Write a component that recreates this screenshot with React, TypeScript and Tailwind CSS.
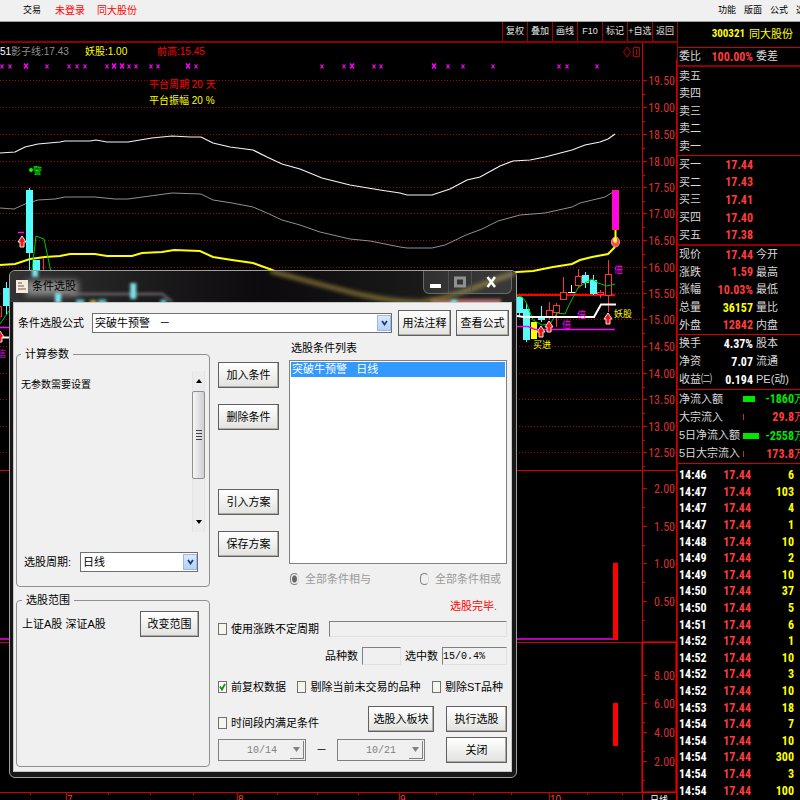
import type { ReactNode } from 'react';

const priceLabels: [string, number][] = [
  ['19.50', 80], ['19.00', 107], ['18.50', 134], ['18.00', 161], ['17.50', 187],
  ['17.00', 213], ['16.50', 240], ['16.00', 267], ['15.50', 293], ['15.00', 319],
  ['14.50', 346], ['14.00', 373], ['13.50', 399], ['13.00', 426], ['12.50', 452],
];

const volumeLabels: [string, number][] = [
  ['2.00', 488], ['1.50', 526], ['1.00', 563], ['0.50', 601],
  ['8.00', 675], ['6.00', 703], ['4.00', 732], ['2.00', 761],
];

const smallMarks = [2, 10, 47, 69, 77, 85, 107, 129, 136, 151, 158, 196, 322, 344, 374, 381, 448, 463, 493, 559, 567, 597];
const bigMarks = [26, 114, 122, 188, 352, 434];

const monthTicks = [30, 66, 108, 150, 193, 237, 277, 317, 358, 399, 436, 473, 511, 549, 587, 622];

const sellRows = ['卖五', '卖四', '卖三', '卖二', '卖一'];

const buyRows = [
  ['买一', '17.44'], ['买二', '17.43'], ['买三', '17.41'], ['买四', '17.40'], ['买五', '17.38'],
];

const quoteRows = [
  ['现价', '17.44', '今开', 'text-[#ff3c3c]'],
  ['涨跌', '1.59', '最高', 'text-[#ff3c3c]'],
  ['涨幅', '10.03%', '最低', 'text-[#ff3c3c]'],
  ['总量', '36157', '量比', 'text-[#ffff00]'],
  ['外盘', '12842', '内盘', 'text-[#ff3c3c]'],
];

const capitalRows = [
  ['换手', '4.37%', '股本', 'text-white'],
  ['净资', '7.07', '流通', 'text-white'],
  ['收益㈡', '0.194', 'PE(动)', 'text-white'],
];

const flowRows = [
  { label: '净流入额', value: '-1860', color: 'text-[#00e600]', bar: 'h-[6px] w-[12px] bg-[#00e600]' },
  { label: '大宗流入', value: '29.8', color: 'text-[#ff3c3c]', bar: 'h-[6px] w-px bg-[#c03030]' },
  { label: '5日净流入额', value: '-2558', color: 'text-[#00e600]', bar: 'h-[6px] w-[16px] bg-[#00e600]' },
  { label: '5日大宗流入', value: '173.8', color: 'text-[#ff3c3c]', bar: 'h-[6px] w-px bg-[#c03030]' },
];

const ticks = [
  ['14:46', '6'], ['14:47', '103'], ['14:47', '4'], ['14:47', '1'], ['14:48', '10'],
  ['14:49', '2'], ['14:49', '10'], ['14:50', '37'], ['14:50', '5'], ['14:51', '6'],
  ['14:52', '1'], ['14:52', '10'], ['14:52', '3'], ['14:52', '10'], ['14:53', '18'],
  ['14:54', '7'], ['14:54', '10'], ['14:54', '300'], ['14:54', '3'], ['14:54', '100'],
];

function Arrow({ x, y }: { x: number; y: number }) {
  return (
    <path
      d={`M${x} ${y - 6} l4 6 h-2 v5 h-4 v-5 h-2 z`}
      fill="#ff1010"
      stroke="#e8e8e8"
      strokeWidth="1"
    />
  );
}

function Candle({ x, top, bottom, high, low, up }: { x: number; top: number; bottom: number; high: number; low: number; up?: boolean }) {
  const color = up ? '#ff3232' : '#54fcfc';
  return (
    <g stroke={color} fill={up ? '#000' : color}>
      <path d={`M${x + 3.5} ${high}V${top}M${x + 3.5} ${bottom}V${low}`} />
      <rect x={x + 0.5} y={top + 0.5} width="6" height={bottom - top - 1} />
    </g>
  );
}

function Chart() {
  return (
    <svg viewBox="0 60 677 740" preserveAspectRatio="xMaxYMin meet" className="block min-h-0 w-full flex-1" fill="none">
      {/* grid and axes */}
      <g stroke="#a80000" strokeDasharray="1 2">
        {priceLabels.map(([t, y]) => <path key={t} d={`M0 ${y + 0.5}H643`} />)}
      </g>
      <g stroke="#d00000">
        <path d="M642.5 60V800M676.5 60V800M0 470.5H677M0 642.5H677M0 792.5H677" />
        {priceLabels.map(([t, y]) => <path key={t} d={`M643 ${y + 0.5}h4M643 ${y + 14.5}h2`} />)}
        {volumeLabels.map(([t, y]) => <path key={t + y} d={`M643 ${y + 0.5}h4M643 ${y + 19.5}h2`} />)}
        {monthTicks.map((x) => <path key={x} d={`M${x + 0.5} 792v3`} />)}
        <path d="M66.5 792v8M237.5 792v8M399.5 792v8M549.5 792v8" />
      </g>
      <path d="M642 642H676V792H642Z" stroke="#ff0000" />
      <g fill="#d83030" fontSize="12" textAnchor="end" className="font-['Liberation_Sans_Narrow','Roboto_Condensed','Liberation_Sans',sans-serif]">
        {priceLabels.map(([t, y]) => <text key={t} x="675" y={y + 5}>{t}</text>)}
        {volumeLabels.map(([t, y]) => <text key={t + y} x="675" y={y + 5}>{t}</text>)}
      </g>
      <g fill="#ff3c3c" fontSize="10">
        <text x="67" y="803">7</text>
        <text x="238" y="803">8</text>
        <text x="400" y="803">9</text>
        <text x="550" y="803">10</text>
        <text x="650" y="803" fill="#fff" fontSize="9">日线</text>
      </g>

      {/* signal marks */}
      <g stroke="#ff00ff">
        {smallMarks.map((x) => <path key={x} d={`M${x - 1.5} 64.500l3 4m0 -4l-3 4`} strokeWidth="1.200" />)}
        {bigMarks.map((x) => <path key={x} d={`M${x - 2} 63.500l4 5m0 -5l-4 5`} strokeWidth="1.500" />)}
      </g>

      {/* bands */}
      <path stroke="#f4f4f4" strokeWidth="1.200" d="M0 153L15 152L25 147L38 144L60 142L65 141L90 141L96 140L107 142L128 142L140 140L152 138L172 136L190 137L201 137L213 143L230 147L253 150L267 157L282 164L300 169L322 178L350 185L380 190L400 193L407 195L432 195L450 189L467 180L480 177L500 166L513 161L530 160L545 157L572 150L585 145L600 142L608 139L615 134" />
      <path stroke="#909090" d="M0 208L14 209L25 204L38 200L55 199L65 197L95 197L115 199L128 199L150 196L172 193L201 194L213 200L232 203L253 207L267 213L282 220L300 225L320 232L350 239L370 241L400 247L407 248L432 248L445 245L466 235L482 229L498 221L520 215L545 213L572 207L580 203L605 197L613 192" />
      <path stroke="#ffff00" strokeWidth="2" d="M0 265L15 264L30 259L45 257L60 256L70 254L95 254L107 256L132 256L142 253L162 252L174 250L200 251L213 257L232 260L253 263L275 271L400 290L517 272L533 271L553 267L572 264L580 260L592 257L608 254L615 247" />

      {/* left candles */}
      <path stroke="#00c800" d="M32 270L36 236L44 239L51 272M0 324L9 311" />
      <Candle x={3} top={288} bottom={306} high={282} low={314} />
      <path stroke="#ff3232" d="M0 306.500H1.500V317H0M43.500 258V270" />
      <Candle x={26} top={190} bottom={253} high={188} low={270} />
      <Candle x={33} top={260} bottom={280} high={260} low={282} />
      <path stroke="#ff00ff" d="M18 232.500h6M0 327.500h10" strokeWidth="1.500" />
      <path stroke="#fff" strokeWidth="2" d="M2 337.500h12" />
      <Arrow x={22} y={242} />
      <Arrow x={0} y={337} />
      <circle cx="31" cy="170" r="2" fill="#00ff00" />

      {/* right candles */}
      <path stroke="#ff0000" strokeWidth="2" d="M517 295H615" />
      <Candle x={516} top={297} bottom={313} high={297} low={317} />
      <Candle x={523} top={309} bottom={340} high={304} low={342} />
      <Candle x={538} top={318} bottom={320} high={306} low={322} />
      <rect x="531" y="322" width="6" height="17" fill="#ffff00" />
      <Candle x={546} top={310} bottom={318} high={302} low={320} up />
      <Candle x={553} top={305} bottom={313} high={303} low={327} up />
      <Candle x={560} top={292} bottom={300} high={277} low={300} up />
      <path stroke="#fff" d="M568 292.500h7M571.500 285v8" />
      <Candle x={575} top={276} bottom={286} high={269} low={288} up />
      <Candle x={582} top={275} bottom={283} high={272} low={288} />
      <Candle x={590} top={280} bottom={294} high={275} low={295} />
      <Candle x={597} top={292} bottom={295} high={290} low={298} up />
      <Candle x={605} top={274} bottom={296} high={260} low={312} up />
      <path stroke="#00c800" d="M517 296L522 297L526 302L533 320L542 325L550 324L557 313L565 314L570 303L578 288L585 283L592 279L598 283L607 286L615 284" />
      <path stroke="#fff" strokeWidth="2" d="M517 316L524 317H594L601 304.500H616" />
      <path stroke="#ff00ff" strokeWidth="1.500" d="M517 326.500H528L535 329.500H615" />
      <Arrow x={541} y={332} />
      <Arrow x={549} y={327} />
      <Arrow x={608} y={319} />
      <rect x="612.500" y="190.500" width="6" height="39" fill="#ff00ff" stroke="#ff2060" />
      <ellipse cx="615.500" cy="242" rx="4" ry="5" fill="#f05050" stroke="#ff9090" />
      <circle cx="615" cy="240" r="2" fill="#fff" />
      <path d="M615.500 230v13" stroke="#ffff00" strokeWidth="2" />

      {/* volume and indicator bars */}
      <path stroke="#b400b4" strokeWidth="2" d="M0 639H613" />
      <rect x="613" y="563" width="5" height="77" fill="#ff0000" />
      <rect x="613" y="703" width="5" height="43" fill="#ff0000" />

      <g fontSize="10">
        <text x="149" y="88" fill="#ff0000">平台周期 20 天</text>
        <text x="149" y="104" fill="#ffff00">平台振幅 20 %</text>
        <text x="33" y="174" fontSize="9" fill="#00ff00">警</text>
        <text x="533" y="348" fontSize="9" fill="#ffff00">买进</text>
        <text x="614" y="317" fontSize="9" fill="#ffff00">妖股</text>
        <text x="614" y="273" fontSize="9" fill="#ff00ff">倍</text>
        <text x="562" y="328" fontSize="9" fill="#ff00ff">倍</text>
        <text x="577" y="318" fontSize="9" fill="#ff00ff">倍</text>
        <text x="-3" y="357" fontSize="9" fill="#ff00ff">信</text>
      </g>
    </svg>
  );
}

function QuoteTable({ rows, className }: { rows: string[][]; className: string }) {
  return (
    <table className={`w-full table-fixed border-collapse whitespace-nowrap leading-none ${className}`}>
      <tbody>
        {rows.map(([label, value, next, color]) => (
          <tr key={label}>
            <th scope="row" className="w-[33px] p-0 pl-px text-left font-normal text-[#d8d8d8]">{label}</th>
            <td className={`w-[42px] p-0 text-right text-xs font-bold font-['Liberation_Sans_Narrow','Roboto_Condensed','Liberation_Sans',sans-serif] ${color}`}>{value}</td>
            <td className="p-0 pl-[3px] text-[#d8d8d8]">{next}</td>
          </tr>
        ))}
      </tbody>
    </table>
  );
}

function QuotePanel() {
  return (
    <aside className="w-[123px] shrink-0 overflow-hidden border-l border-[#a00000] text-[11px] text-[#d8d8d8]">
      <h1 className="flex h-[26px] items-center justify-end gap-1 border-b border-[#d00000] pr-[7px] whitespace-nowrap text-[#ffff00]">
        <span className="text-[11px] font-bold font-['Liberation_Sans_Narrow','Roboto_Condensed','Liberation_Sans',sans-serif]">300321</span>
        <span>同大股份</span>
      </h1>
      <QuoteTable rows={[['委比', '100.00%', '委差', 'text-[#ff3c3c]']]} className="h-[17px]" />
      <QuoteTable rows={sellRows.map((r) => [r, '', '', ''])} className="h-[91px] border-y border-t-2 border-t-[#900000] border-b-[#d00000]" />
      <QuoteTable rows={buyRows.map(([a, b]) => [a, b, '', 'text-[#ff3c3c]'])} className="h-[90px] border-b-2 border-[#900000]" />
      <QuoteTable rows={quoteRows} className="h-[89px] border-b border-[#d00000]" />
      <QuoteTable rows={capitalRows} className="h-[55px] border-b border-[#d00000]" />
      <table className="h-[74px] w-[127px] table-fixed border-collapse border-b border-[#d00000] whitespace-nowrap leading-none">
        <tbody>
          {flowRows.map((r) => (
            <tr key={r.label}>
              <th scope="row" className="w-[65px] p-0 pl-px text-left font-normal">{r.label}</th>
              <td className="w-[18px] p-0"><div className={r.bar} /></td>
              <td className={`p-0 text-right ${r.color}`}>
                <span className="text-xs font-bold font-['Liberation_Sans_Narrow','Roboto_Condensed','Liberation_Sans',sans-serif]">{r.value}</span>万
              </td>
            </tr>
          ))}
        </tbody>
      </table>
      <table className="mt-[3px] h-[332px] w-full table-fixed border-collapse text-xs leading-none font-bold font-['Liberation_Sans_Narrow','Roboto_Condensed','Liberation_Sans',sans-serif]">
        <tbody>
          {ticks.map(([time, vol], i) => (
            <tr key={i}>
              <td className="w-[33px] p-0 pl-px text-white">{time}</td>
              <td className="w-[40px] p-0 text-right text-[#ff3c3c]">17.44</td>
              <td className="p-0 pr-1.5 text-right text-[#ffff00]">{vol}</td>
            </tr>
          ))}
        </tbody>
      </table>
    </aside>
  );
}

function Btn({ children, className = '' }: { children: ReactNode; className?: string }) {
  return (
    <button className={`h-[26px] shrink-0 border border-[#606060] bg-gradient-to-b from-white to-[#e2e2e0] whitespace-nowrap shadow-[inset_-1px_-1px_0_#b0aca4] ${className}`}>
      {children}
    </button>
  );
}

function Combo({ id, value, className = '' }: { id: string; value: string; className?: string }) {
  return (
    <div className={`relative ${className}`}>
      <select id={id} className="block h-5 w-full appearance-none border border-[#707070] bg-white pl-[2px]">
        <option>{value}</option>
      </select>
      <span className="pointer-events-none absolute top-[2px] right-px flex h-4 w-[14px] items-center justify-center border border-[#9ab8e8] bg-gradient-to-b from-[#dce9ff] to-[#b4d0fa]">
        <svg width="7" height="6" viewBox="0 0 7 6" fill="none" stroke="#1c3c78" strokeWidth="1.800"><path d="M1 1l2.500 3.500L6 1" /></svg>
      </span>
    </div>
  );
}

function Check({ label, checked }: { label: string; checked?: boolean }) {
  return (
    <label className="flex h-[14px] items-center gap-1 whitespace-nowrap">
      <span className="relative flex">
        <input type="checkbox" defaultChecked={checked} className="peer h-3 w-[9px] appearance-none border border-[#707070] bg-[#f6f4ee] checked:bg-white" />
        <svg width="9" height="12" viewBox="0 0 9 12" fill="none" stroke="#109010" strokeWidth="1.800" className="pointer-events-none invisible absolute inset-0 peer-checked:visible">
          <path d="M2 5.500L4 8.500L7 3" />
        </svg>
      </span>
      {label}
    </label>
  );
}

function Radio({ label, checked }: { label: string; checked?: boolean }) {
  return (
    <label className="flex items-center gap-1.5 whitespace-nowrap text-[#9a9a9a]">
      <input type="radio" name="combine" disabled defaultChecked={checked} className="h-3 w-[9px] appearance-none rounded-full border border-[#808080] border-r-[#d8d8d8] bg-[#f0f0f0] checked:bg-[radial-gradient(#666_0_2px,#f0f0f0_3px)]" />
      {label}
    </label>
  );
}

function DateBox({ value, label }: { value: string; label: string }) {
  return (
    <div className="relative w-[88px]">
      <input aria-label={label} disabled defaultValue={value} className="block h-[22px] w-full border border-[#808080] pl-7 text-[10px] text-[#808080] font-['Liberation_Mono',monospace]" />
      <span className="pointer-events-none absolute top-0.5 right-0.5 flex h-[18px] w-3.5 items-center justify-center border-r border-b border-[#808080] bg-[#eee]">
        <svg width="7" height="5" viewBox="0 0 7 5" fill="#808080"><path d="M0 0h7L3.500 5z" /></svg>
      </span>
    </div>
  );
}

function TitleBar() {
  return (
    <div className="relative flex h-[31px] shrink-0 items-center overflow-hidden rounded-t-md bg-gradient-to-r from-[#333] via-[#0c0a0c] to-[#242424]">
      <svg viewBox="0 0 505 31" preserveAspectRatio="none" className="absolute inset-0 h-full w-full" fill="none">
        <path d="M16 17h52" stroke="#c8c8c8" strokeWidth="15" opacity=".6" className="blur-[3px]" />
        <g className="blur-[1.500px]">
          <path d="M60 23h92l10 8" stroke="#7c747c" strokeWidth="2" />
          <path d="M25 -6v12M48 22v10M123 12v16" stroke="#7ce4ec" strokeWidth="6" />
          <path d="M66 31h8M88 31h8M150 31h6" stroke="#58c8c8" strokeWidth="5" />
          <path d="M80 31h6" stroke="#c8b428" strokeWidth="4" />
          <path d="M420 31h70" stroke="#b06868" strokeWidth="6" />
          <path d="M440 31h6" stroke="#7ce4ec" strokeWidth="6" />
        </g>
        <path d="M260 0C320 16 370 32 410 31C450 26 470 12 505 2" stroke="#857635" strokeWidth="4" className="blur-[2px]" />
      </svg>
      <svg width="12" height="13" viewBox="0 0 12 13" className="relative ml-1.5 shrink-0">
        <path fill="#f4ece0" d="M0 0h12v13H0z" />
        <path d="M2 3h4M2 6h6M2 9h8" stroke="#a08870" strokeWidth="1.500" />
      </svg>
      <h2 className="relative ml-1 text-[11px] text-black">条件选股</h2>
      <div className="relative mr-[4px] ml-auto flex h-[23px] self-start overflow-hidden rounded-b-md border border-t-0 border-[#686868] bg-white/10">
        <button aria-label="最小化" className="flex w-[25px] items-center justify-center border-r border-[#505050]">
          <svg width="12" height="12" viewBox="0 0 12 12"><path fill="#fff" d="M0 8h11v4H0z" /></svg>
        </button>
        <button aria-label="最大化" className="flex w-[23px] items-center justify-center border-r border-[#505050]">
          <svg width="12" height="12" viewBox="0 0 12 12" fill="none"><path stroke="#909090" strokeWidth="3" d="M1.500 2h9v8h-9z" /></svg>
        </button>
        <button aria-label="关闭窗口" className="flex w-[39px] items-center justify-center">
          <svg width="11" height="12" viewBox="0 0 11 12" fill="none" stroke="#fff" strokeWidth="2.500"><path d="M1.500 1L9 11M9 1L1.500 11" /></svg>
        </button>
      </div>
    </div>
  );
}

function Dialog() {
  return (
    <section className="absolute top-[270px] left-[9px] flex w-[508px] flex-col rounded-md border border-[#a0a0a0] bg-[#181818] text-[11px] text-black">
      <TitleBar />
      <div className="mr-1 mb-[5px] ml-[3px] border border-[#c8c8c8] bg-[#f0f0f0] px-0.5 pt-[7px] pb-1">
        <div className="flex items-center pl-0.5">
          <label htmlFor="formula" className="w-[74px] shrink-0 whitespace-nowrap">条件选股公式</label>
          <Combo id="formula" value={'突破牛预警\u00a0\u00a0\u00a0－'} className="min-w-0 flex-1" />
          <Btn className="ml-1.5 w-[53px]">用法注释</Btn>
          <Btn className="ml-[5px] w-[53px]">查看公式</Btn>
        </div>

        <div className="flex">
          <div className="mt-[11px] flex w-[194px] shrink-0 flex-col gap-1.5">
            <fieldset className="h-[240px] min-w-0 rounded border border-[#909090] px-1">
              <legend className="px-1 leading-[14px]">计算参数</legend>
              <div className="mt-2.5 flex h-[161px] justify-between">
                <p className="pt-1.5 text-[10px]">无参数需要设置</p>
                <div className="flex w-[13px] flex-col items-center border-x border-[#e4e4e4] bg-[#ececec]">
                  <button aria-label="向上滚动" className="flex h-5 items-center"><svg width="6" height="4" viewBox="0 0 6 4"><path d="M3 0l3 4H0z" /></svg></button>
                  <div className="flex h-[88px] w-[13px] items-center justify-center rounded-xs border border-[#909090] bg-gradient-to-r from-[#f6f6f6] to-[#cfcfd4]">
                    <svg width="6" height="10" viewBox="0 0 6 10" stroke="#404040"><path d="M0 .5h6M0 3.500h6M0 6.500h6M0 9.500h6" /></svg>
                  </div>
                  <button aria-label="向下滚动" className="mt-auto flex h-5 items-center"><svg width="6" height="4" viewBox="0 0 6 4"><path d="M0 0h6L3 4z" /></svg></button>
                </div>
              </div>
              <div className="mt-5 flex items-center pr-[7px] pl-[3px]">
                <label htmlFor="period" className="w-[56px] shrink-0 whitespace-nowrap">选股周期:</label>
                <Combo id="period" value="日线" className="min-w-0 flex-1" />
              </div>
            </fieldset>
            <fieldset className="h-[174px] min-w-0 rounded border border-[#909090] pr-2.5 pl-[5px]">
              <legend className="px-1 leading-[14px]">选股范围</legend>
              <div className="mt-1 flex items-center justify-between">
                <span className="whitespace-nowrap">上证A股 深证A股</span>
                <Btn className="w-[59px]">改变范围</Btn>
              </div>
            </fieldset>
          </div>

          <div className="ml-2 min-w-0 flex-1 pt-[5px] pr-0.5">
            <div className="flex gap-2.5">
              <div className="flex w-[61px] shrink-0 flex-col gap-4 pt-[21px]">
                <Btn>加入条件</Btn>
                <Btn>删除条件</Btn>
                <Btn className="mt-[43px]">引入方案</Btn>
                <Btn>保存方案</Btn>
              </div>
              <div className="min-w-0 flex-1">
                <h3 className="pl-0.5 leading-[14px]">选股条件列表</h3>
                <ul className="mt-[5px] h-[204px] border border-[#808080] bg-white p-px">
                  <li className="h-[15px] bg-[#3399ff] pl-px leading-[14px] whitespace-pre text-white">突破牛预警   日线</li>
                </ul>
                <div className="mt-2 flex h-[14px] items-center justify-between pr-1.5 pl-px">
                  <Radio label="全部条件相与" checked />
                  <Radio label="全部条件相或" />
                </div>
              </div>
            </div>
            <p className="mt-[13px] pr-2.5 text-right leading-[14px] text-[#ff0000]">选股完毕.</p>
            <div className="mt-2 flex items-center justify-between">
              <Check label="使用涨跌不定周期" />
              <input aria-label="周期" className="h-4 w-[178px] border border-[#808080] border-r-[#e0e0e0] border-b-[#e0e0e0]" />
            </div>
            <div className="mt-2.5 flex items-center justify-end gap-1">
              <label htmlFor="total">品种数</label>
              <input id="total" readOnly className="h-[18px] w-[39px] border border-[#808080] border-r-[#e0e0e0] border-b-[#e0e0e0]" />
              <label htmlFor="hits">选中数</label>
              <input id="hits" readOnly value="15/0.4%" className="h-[18px] w-[65px] border border-[#808080] border-r-[#e0e0e0] border-b-[#e0e0e0] font-['Liberation_Mono',monospace] text-[10px]" />
            </div>
            <div className="mt-[15px] flex justify-between pr-1">
              <Check label="前复权数据" checked />
              <Check label="剔除当前未交易的品种" />
              <Check label="剔除ST品种" />
            </div>
            <div className="mt-3 flex items-center">
              <div className="mt-2"><Check label="时间段内满足条件" /></div>
              <Btn className="ml-auto w-[66px]">选股入板块</Btn>
              <Btn className="ml-3 w-[61px]">执行选股</Btn>
            </div>
            <div className="mt-[5px] flex items-center">
              <DateBox value="10/14" label="开始日期" />
              <span className="flex-1 text-center">－</span>
              <DateBox value="10/21" label="结束日期" />
              <Btn className="ml-[21px] w-[61px]">关闭</Btn>
            </div>
          </div>
        </div>
      </div>
    </section>
  );
}

export default function App() {
  return (
    <div className="relative flex h-screen flex-col overflow-hidden bg-black font-['Liberation_Sans','Noto_Sans_CJK_SC',sans-serif]">
      <header className="flex h-[22px] shrink-0 items-center overflow-hidden border-b border-[#a0a0a0] bg-[#f0f0f0] pl-[23px] text-[9px] whitespace-nowrap text-black">
        <span>交易</span>
        <span className="ml-3.5 text-[10px] text-[#ff0000]">未登录</span>
        <span className="ml-3 text-[10px] text-[#ff0000]">同大股份</span>
        <nav className="ml-auto flex w-[82px] gap-2 overflow-hidden">
          <a href="#function">功能</a>
          <a href="#layout">版面</a>
          <a href="#formula">公式</a>
          <a href="#options">选项</a>
        </nav>
      </header>

      <div className="flex min-h-0 flex-1">
        <main className="flex min-w-0 flex-1 flex-col">
          <div className="flex h-[21px] shrink-0 justify-end border-b-2 border-[#900000] text-[9px] text-[#e0e0e0]">
            {['复权', '叠加', '画线', 'F10', '标记', '+自选', '返回'].map((t) => (
              <button key={t} className="w-[25px] border-l border-[#a00000] whitespace-nowrap">{t}</button>
            ))}
          </div>
          <div className="flex h-[17px] shrink-0 items-center text-[10px] whitespace-nowrap">
            <span className="w-[11px] text-white">51</span>
            <span className="w-[74px] text-[#909090]">影子线:17.43</span>
            <span className="w-[72px] text-[#ffff00]">妖股:1.00</span>
            <span className="text-[#ff0000]">前高:15.45</span>
            <svg width="18" height="12" viewBox="0 0 18 12" fill="none" stroke="#b00000" className="mr-px ml-auto">
              <path d="M4 1l3.500 5L4 11L.5 6zM10.500 1.500h6v9h-6zM13.500 3v6" />
            </svg>
            <div className="h-full w-[35px] border-l border-[#d00000]" />
          </div>
          <Chart />
        </main>
        <QuotePanel />
      </div>

      <Dialog />
    </div>
  );
}
